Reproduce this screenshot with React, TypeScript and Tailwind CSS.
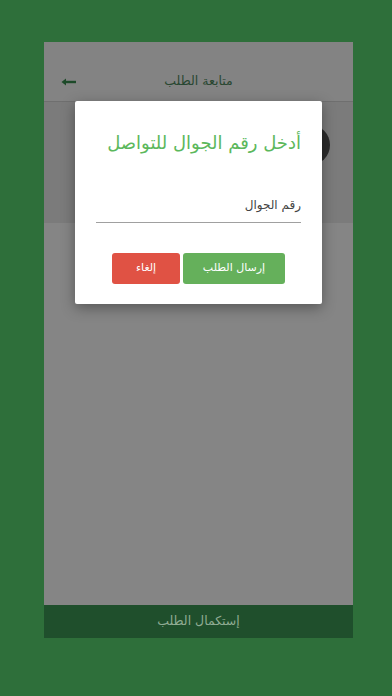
import React from "react";

const arabic = { fontFamily: '"DejaVu Sans", "Noto Sans", sans-serif' };

export default function App() {
  return (
    <div
      className="relative h-[696px] w-[392px] overflow-hidden bg-[#2e6f3a] pl-[44px] pt-[42px]"
      style={arabic}
    >
      {/* phone screen (dimmed behind modal) */}
      <div className="flex h-[596px] w-[309px] flex-col bg-[#858585]">
        <div className="relative flex h-[59px] items-center justify-center bg-[#838383]">
          <svg
            className="absolute left-[17px] top-[36px]"
            width="16"
            height="8"
            viewBox="0 0 16 8"
          >
            <path d="M15 4H3" stroke="#1d4a29" strokeWidth="2.4" />
            <path d="M0.5 4L5 0.5V7.5Z" fill="#1d4a29" />
          </svg>
          <span dir="rtl" className="mt-[20px] text-[12.5px] text-[#284731]">
            متابعة الطلب
          </span>
        </div>
        <div className="h-px bg-[#6f6f6f]" />
        <div className="flex h-[121px] justify-end bg-[#7b7b7b] pr-[23px] pt-[23px]">
          <div className="h-[40px] w-[40px] rounded-full bg-[#2b2b2b]" />
        </div>
        <div className="flex-1" />
        <div className="flex h-[33px] items-center justify-center bg-[#1f4f2c]">
          <span dir="rtl" className="text-[12.5px] text-[#8fab93]">
            إستكمال الطلب
          </span>
        </div>
      </div>

      {/* modal */}
      <div
        dir="rtl"
        className="absolute left-[75px] top-[101px] flex h-[203px] w-[247px] flex-col rounded-[2px] bg-white px-[21px] shadow-[0_4px_14px_rgba(0,0,0,0.35)]"
      >
        <h2 className="mt-[28px] whitespace-nowrap text-[18px] leading-[28px] text-[#5cb85c]">
          أدخل رقم الجوال للتواصل
        </h2>
        <div className="mt-[40px] border-b-[1.5px] border-[#a0a0a0] pb-[9px] text-[12px] leading-[16px] text-[#444444]">
          رقم الجوال
        </div>
        <div className="mt-[30px] flex gap-[3px] pr-[16px]">
          <button className="flex h-[31px] w-[102px] items-center justify-center rounded-[3px] bg-[#65b05b] text-[11px] text-white">
            إرسال الطلب
          </button>
          <button className="flex h-[31px] w-[68px] items-center justify-center rounded-[3px] bg-[#e05244] text-[11px] text-white">
            إلغاء
          </button>
        </div>
      </div>
    </div>
  );
}
